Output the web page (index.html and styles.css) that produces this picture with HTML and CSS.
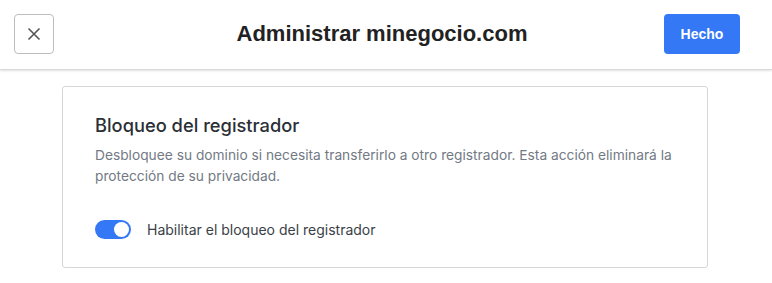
FILE: index.html
```html
<!DOCTYPE html>
<html lang="es">
<head>
<meta charset="utf-8">
<link rel="stylesheet" href="styles.css">
</head>
<body>
<header class="topbar">
  <button class="close-btn" aria-label="Cerrar">
    <svg width="16" height="16" viewBox="0 0 16 16"><path d="M2.5 2.5 L13.5 13.5 M13.5 2.5 L2.5 13.5" stroke="#555" stroke-width="1.6" fill="none"/></svg>
  </button>
  <h1 class="title">Administrar minegocio.com</h1>
  <div class="right"><button class="done-btn">Hecho</button></div>
</header>
<main class="content">
  <section class="card">
    <h2 class="card-title">Bloqueo del registrador</h2>
    <p class="card-desc">Desbloquee su dominio si necesita transferirlo a otro registrador. Esta acción eliminará la protección de su privacidad.</p>
    <label class="toggle-row">
      <span class="toggle"><span class="knob"></span></span>
      <span class="toggle-label">Habilitar el bloqueo del registrador</span>
    </label>
  </section>
</main>
</body>
</html>
```
FILE: styles.css
```css
* { box-sizing: border-box; }
html, body { margin: 0; padding: 0; background: #fff; }
body { font-family: Inter, "Noto Sans", sans-serif; color: #2b2f36; }
.topbar {
  height: 70px;
  display: grid;
  grid-template-columns: 1fr auto 1fr;
  align-items: start;
  padding: 14px 32px 0 14px;
  border-bottom: 1px solid #d9d9d9;
  box-shadow: 0 1px 2px rgba(0,0,0,0.12);
}
.close-btn {
  width: 40px; height: 40px;
  border: 1px solid #bdbdbd;
  border-radius: 4px;
  background: #fff;
  display: flex; align-items: center; justify-content: center;
  padding: 0;
}
.title {
  margin: 0;
  font-family: "Liberation Sans", Arial, sans-serif;
  font-size: 22px;
  line-height: 40px;
  font-weight: 700;
  color: #222;
  padding-left: 10px;
}
.right { display: flex; justify-content: flex-end; }
.done-btn {
  width: 76px; height: 40px;
  border: none;
  border-radius: 4px;
  background: #3478f6;
  color: #fff;
  font-family: "Liberation Sans", Arial, sans-serif;
  font-weight: 700;
  font-size: 14px;
}
.content {
  padding: 16px 64px 0 62px;
}
.card {
  border: 1px solid #d6d6d6;
  border-radius: 3px;
  padding: 26px 32px 27px 32px;
  height: 182px;
}
.card-title {
  margin: 0;
  font-size: 18.3px;
  font-weight: 500;
  color: #2b2f36;
  line-height: 24px;
}
.card-desc {
  margin: 8px 0 0;
  font-size: 13.75px;
  line-height: 21px;
  color: #737a84;
}
.toggle-row {
  display: flex;
  align-items: center;
  gap: 16px;
  margin-top: 33px;
}
.toggle {
  width: 36px; height: 19px;
  border-radius: 10px;
  background: #3478f6;
  position: relative;
  display: inline-block;
}
.knob {
  position: absolute;
  right: 2px; top: 2px;
  width: 15px; height: 15px;
  border-radius: 50%;
  background: #fff;
}
.toggle-label {
  font-size: 14px;
  color: #3a3f47;
}
```
